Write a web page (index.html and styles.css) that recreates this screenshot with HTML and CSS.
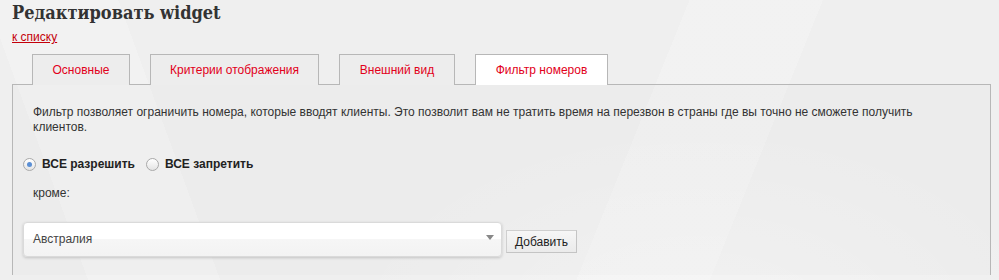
FILE: index.html
```html
<!DOCTYPE html>
<html lang="ru">
<head>
<meta charset="utf-8">
<title>Редактировать widget</title>
<link rel="stylesheet" href="styles.css">
</head>
<body>
<div class="page">
  <h1 class="title">Редактировать widget</h1>
  <a class="back" href="#">к списку</a>
  <ul class="tabs">
    <li class="tab tab-main">Основные</li>
    <li class="tab tab-criteria">Критерии отображения</li>
    <li class="tab tab-look">Внешний вид</li>
    <li class="tab tab-filter active">Фильтр номеров</li>
  </ul>
  <div class="panel">
    <p class="desc">Фильтр позволяет ограничить номера, которые вводят клиенты. Это позволит вам не тратить время на перезвон в страны где вы точно не сможете получить клиентов.</p>
    <div class="radios">
      <label class="radio"><span class="dot checked"></span>ВСЕ разрешить</label>
      <label class="radio"><span class="dot"></span>ВСЕ запретить</label>
    </div>
    <div class="except">кроме:</div>
    <div class="row">
      <div class="select"><span>Австралия</span><span class="arrow"></span></div>
      <button class="btn">Добавить</button>
    </div>
  </div>
</div>
</body>
</html>
```

FILE: styles.css
```css
html, body {
  margin: 0;
  padding: 0;
}
body {
  width: 999px;
  height: 280px;
  overflow: hidden;
  background-color: #efefef;
  background-image:
    radial-gradient(ellipse 520px 300px at 700px 330px, rgba(255,255,255,0.35), rgba(255,255,255,0) 70%),
    linear-gradient(112deg, rgba(255,255,255,0) 0 62%, rgba(255,255,255,0.18) 62% 74%, rgba(255,255,255,0) 74%),
    linear-gradient(70deg, rgba(0,0,0,0) 0 8%, rgba(255,255,255,0.2) 8% 20%, rgba(0,0,0,0) 20%);
  font-family: "Liberation Sans", Arial, sans-serif;
  font-size: 12px;
  color: #333;
}
.page {
  padding: 0 8px 0 12px;
}
.title {
  margin: 0;
  padding-top: 2px;
  font-family: "DejaVu Serif Condensed", "DejaVu Serif", serif;
  font-stretch: condensed;
  font-weight: bold;
  font-size: 18px;
  line-height: 22px;
  color: #333;
}
.back {
  display: block;
  width: fit-content;
  margin-top: 6px;
  color: #c4000a;
  font-size: 12px;
  line-height: 14px;
  text-decoration: underline;
}
.tabs {
  display: flex;
  gap: 20px;
  list-style: none;
  margin: 10px 0 0;
  padding: 0 0 0 20px;
  height: 30px;
  border-bottom: 1px solid #b7b7b7;
}
.tab {
  box-sizing: border-box;
  height: 31px;
  margin-bottom: -1px;
  padding: 0;
  border: 1px solid #b7b7b7;
  border-bottom: none;
  background: #ededed;
  color: #e2001a;
  font-size: 12px;
  line-height: 31px;
  text-align: center;
}
.tab-main { width: 98px; }
.tab-criteria { width: 169px; }
.tab-look { width: 116px; }
.tab-filter { width: 133px; }
.tab.active {
  background: #fff;
}
.panel {
  height: 190px;
  border: 1px solid #b7b7b7;
  border-top: none;
  border-bottom: none;
  padding: 0 10px;
  background: rgba(0,0,0,0.012);
}
.desc {
  margin: 0;
  padding: 20px 20px 0 10px;
  line-height: 15px;
  color: #333;
}
.radios {
  display: flex;
  gap: 11px;
  margin-top: 21px;
}
.radio {
  display: flex;
  align-items: center;
  font-weight: bold;
  color: #222;
  line-height: 16px;
}
.dot {
  box-sizing: border-box;
  width: 13px;
  height: 13px;
  margin-right: 6px;
  border-radius: 50%;
  border: 1px solid #a9a9a9;
  background: linear-gradient(#ffffff, #e4e4e4);
  position: relative;
}
.dot.checked::after {
  content: "";
  position: absolute;
  left: 3px;
  top: 3px;
  width: 5px;
  height: 5px;
  border-radius: 50%;
  background: #5b8fd4;
}
.except {
  margin-top: 13px;
  padding-left: 10px;
  line-height: 16px;
}
.row {
  display: flex;
  align-items: flex-end;
  gap: 4px;
  margin-top: 21px;
}
.select {
  box-sizing: border-box;
  width: 479px;
  height: 35px;
  border: 1px solid #dadada;
  border-radius: 4px;
  background: linear-gradient(#ffffff 0%, #ffffff 50%, #f6f6f6 50%, #f3f3f3 100%);
  box-shadow: 0 1px 3px rgba(0,0,0,0.18);
  display: flex;
  align-items: center;
  justify-content: space-between;
  padding: 0 7px 2px 9px;
  color: #444;
  font-size: 12px;
}
.arrow {
  width: 0;
  height: 0;
  border-left: 4px solid transparent;
  border-right: 4px solid transparent;
  border-top: 5px solid #888;
  margin-bottom: 2px;
}
.btn {
  box-sizing: border-box;
  height: 23px;
  margin-bottom: 4px;
  padding: 0 8px;
  border: 1px solid #cfcfcf;
  border-right-color: #c4c4c4;
  border-bottom-color: #c4c4c4;
  border-radius: 0;
  background: linear-gradient(#f6f6f6, #ebebeb);
  font-family: "Liberation Sans", Arial, sans-serif;
  font-size: 12px;
  color: #222;
}
```
